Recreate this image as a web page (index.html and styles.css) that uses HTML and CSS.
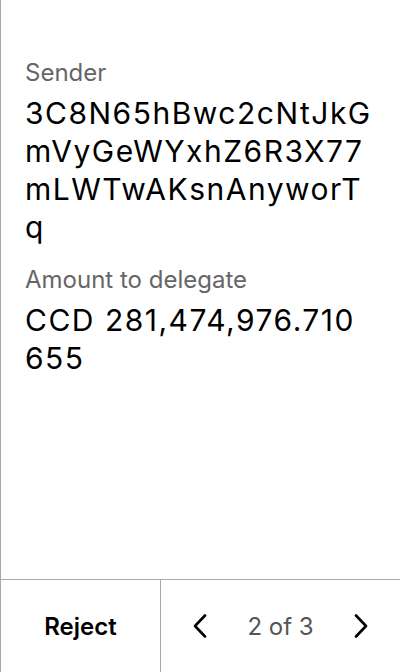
FILE: index.html
```html
<!DOCTYPE html>
<html>
<head>
<meta charset="utf-8">
<link rel="stylesheet" href="styles.css">
</head>
<body>
<div class="screen">
  <main class="content">
    <div class="field">
      <div class="label">Sender</div>
      <div class="value">3C8N65hBwc2cNtJkGmVyGeWYxhZ6R3X77mLWTwAKsnAnyworTq</div>
    </div>
    <div class="field">
      <div class="label">Amount to delegate</div>
      <div class="value">CCD 281,474,976.710655</div>
    </div>
  </main>
  <footer class="footer">
    <div class="reject">Reject</div>
    <div class="pager">
      <svg class="chev" width="14" height="24" viewBox="0 0 14 24"><path d="M12 1.5 L2 12 L12 22.5" fill="none" stroke="#000" stroke-width="2.6" stroke-linecap="round" stroke-linejoin="round"/></svg>
      <span class="count">2 of 3</span>
      <svg class="chev" width="14" height="24" viewBox="0 0 14 24"><path d="M2 1.5 L12 12 L2 22.5" fill="none" stroke="#000" stroke-width="2.6" stroke-linecap="round" stroke-linejoin="round"/></svg>
    </div>
  </footer>
</div>
</body>
</html>
```
FILE: styles.css
```css
html, body {
  margin: 0;
  padding: 0;
  background: #fff;
}
body {
  font-family: Inter, "Noto Sans", sans-serif;
  color: #000;
}
.screen {
  width: 400px;
  height: 672px;
  box-sizing: border-box;
  border-left: 1px solid #a8a8a8;
  display: flex;
  flex-direction: column;
}
.content {
  flex: 1;
  padding: 58px 28px 0 24px;
}
.field {
  margin-bottom: 19px;
}
.label {
  font-size: 24px;
  line-height: 30px;
  color: #666;
  margin-bottom: 6px;
}
.value {
  font-size: 30px;
  line-height: 38px;
  letter-spacing: 1.5px;
  word-break: break-all;
}
.footer {
  height: 92px;
  border-top: 1px solid #a8a8a8;
  display: flex;
}
.reject {
  width: 159px;
  border-right: 1px solid #a8a8a8;
  display: flex;
  align-items: center;
  justify-content: center;
  font-size: 24px;
  font-weight: 600;
}
.pager {
  flex: 1;
  display: flex;
  align-items: center;
  justify-content: space-between;
  padding: 0 32px;
}
.count {
  font-size: 24px;
  color: #555;
}
```
